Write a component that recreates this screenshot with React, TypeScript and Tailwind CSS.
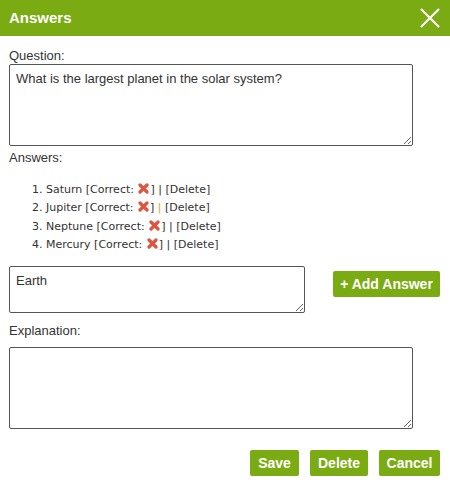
import React from 'react';

const answers = ['Saturn', 'Jupiter', 'Neptune', 'Mercury'];

const RedCross: React.FC = () => (
  <svg width="11" height="11" viewBox="0 0 11 11" className="inline-block align-[-1px] mx-[1px]">
    <path d="M2 2 L9 9 M9 2 L2 9" stroke="#e2533f" strokeWidth="3.2" strokeLinecap="round" />
  </svg>
);

const GreenButton: React.FC<{ label: string; className?: string }> = ({ label, className }) => (
  <button
    className={`h-[26px] whitespace-nowrap rounded-[2px] bg-[#7aab13] text-[14px] font-bold text-white ${className ?? ''}`}
  >
    {label}
  </button>
);

const App: React.FC = () => {
  return (
    <div className="w-[450px] h-[486px] bg-white text-[#333] font-['Liberation_Sans',Arial,sans-serif] text-[13px]">
      {/* Header */}
      <div className="flex h-[36px] items-center justify-between bg-[#7aab13] pl-[9px] pr-[10px]">
        <span className="text-[15px] font-bold text-white">Answers</span>
        <svg width="20" height="20" viewBox="0 0 20 20">
          <path d="M1 1 L19 19 M19 1 L1 19" stroke="white" strokeWidth="2.2" />
        </svg>
      </div>

      <div className="pl-[9px] pr-[10px] pt-[12px]">
        <div className="leading-[16px]">Question:</div>
        <textarea
          className="block h-[82px] w-[404px] rounded-[2px] border border-[#555] px-[6px] py-[4px] text-[13px] outline-none"
          defaultValue="What is the largest planet in the solar system?"
        />

        <div className="mt-[4px] leading-[16px]">Answers:</div>
        <ol className="mt-[15px] list-decimal pl-[37px] font-['DejaVu_Sans',Verdana,sans-serif] text-[11px] leading-[18.3px] text-[#333]">
          {answers.map((a, i) => (
            <li key={a}>
              {a} [Correct: <RedCross />]{' '}
              <span className={i === 1 ? 'text-[#e0a030]' : ''}>|</span> [Delete]
            </li>
          ))}
        </ol>

        <div className="mt-[12px] flex items-start">
          <textarea
            className="block h-[47px] w-[296px] rounded-[2px] border border-[#555] px-[6px] py-[4px] text-[13px] outline-none"
            defaultValue="Earth"
          />
          <GreenButton label="+ Add Answer" className="ml-[28px] mt-[5px] w-[107px]" />
        </div>

        <div className="mt-[10px] leading-[16px]">Explanation:</div>
        <textarea className="mt-[8px] block h-[82px] w-[404px] rounded-[2px] border border-[#555] px-[6px] py-[4px] outline-none" />

        <div className="mt-[21px] flex justify-end gap-[11px]">
          <GreenButton label="Save" className="w-[49px]" />
          <GreenButton label="Delete" className="w-[58px]" />
          <GreenButton label="Cancel" className="w-[61px]" />
        </div>
      </div>
    </div>
  );
};

export default App;
